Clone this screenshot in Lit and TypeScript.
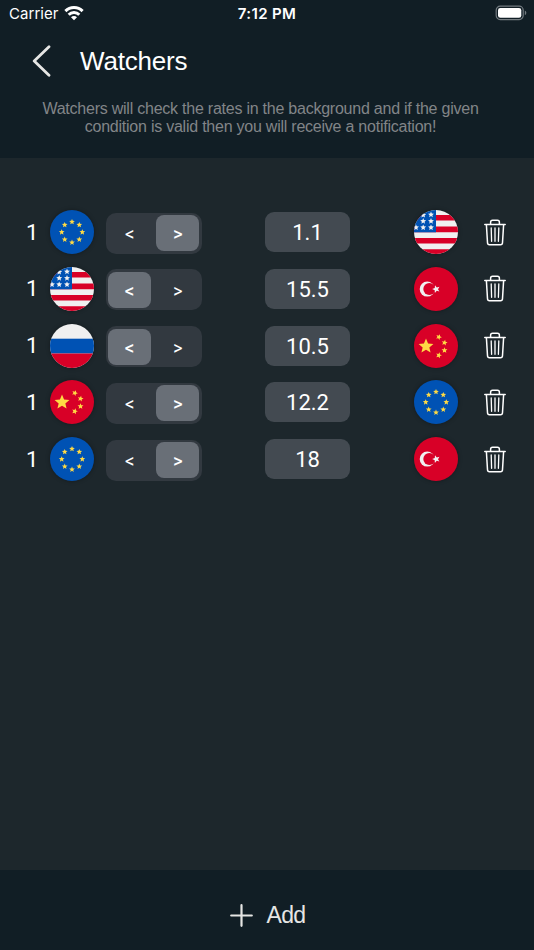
import { LitElement, html, svg, css } from "lit";
import { customElement, property, state } from "lit/decorators.js";
import { classMap } from "lit/directives/class-map.js";

type Currency = "eu" | "us" | "ru" | "cn" | "tr";

interface Watcher {
  amount: number;
  from: Currency;
  op: "<" | ">";
  value: string;
  to: Currency;
}

const star = (cx: number, cy: number, r: number, turn = 0) => {
  const pts: string[] = [];
  for (let i = 0; i < 10; i++) {
    const a = -Math.PI / 2 + turn + (i * Math.PI) / 5;
    const d = i % 2 ? r * 0.45 : r;
    pts.push(`${(cx + d * Math.cos(a)).toFixed(2)},${(cy + d * Math.sin(a)).toFixed(2)}`);
  }
  return svg`<polygon points=${pts.join(" ")} />`;
};

const FLAGS = {
  eu: () => svg`
    <rect width="44" height="44" fill="#0052b4" />
    <g fill="#ffda44">${Array.from({ length: 8 }, (_, i) =>
      star(22 + 10.3 * Math.sin((i * Math.PI) / 4), 22.2 - 10.3 * Math.cos((i * Math.PI) / 4), 3)
    )}</g>`,
  us: () => svg`
    <rect width="44" height="44" fill="#f0f0f0" />
    <path fill="#d80027" d="M0 5h44v5.6H0zM0 16.6h44v5.7H0zM0 28h44v5.6H0zM0 39.3h44V44H0z" />
    <rect width="22" height="22.3" fill="#0052b4" />
    <g fill="#f0f0f0">${[
      [9.2, 5], [17, 4.7], [9.2, 11.2], [17, 11.2], [2, 17.5], [9.2, 17.5], [17, 17.5],
    ].map(([x, y]) => star(x, y, 3.1))}</g>`,
  ru: () => svg`
    <rect width="44" height="44" fill="#f0f0f0" />
    <rect y="14.7" width="44" height="14.8" fill="#0052b4" />
    <rect y="29.5" width="44" height="14.5" fill="#d80027" />`,
  cn: () => svg`
    <rect width="44" height="44" fill="#d80027" />
    <g fill="#ffda44">
      ${star(12, 22.3, 7.8)}${star(24.8, 13, 3.1, 0.4)}${star(30.5, 18.7, 3.1, 0.2)}
      ${star(30.5, 26.3, 3.1)}${star(24.8, 31.3, 3.1, 0.3)}
    </g>`,
  tr: () => svg`
    <rect width="44" height="44" fill="#d80027" />
    <circle cx="13.2" cy="22.1" r="7.5" fill="#f0f0f0" />
    <circle cx="15.3" cy="22.1" r="6" fill="#d80027" />
    <g fill="#f0f0f0">${star(22.2, 22.1, 4, -0.3)}</g>`,
};

@customElement("currency-flag")
export class CurrencyFlag extends LitElement {
  @property() code: Currency = "eu";

  static styles = css`
    :host {
      display: block;
      width: 44px;
      height: 44px;
      border-radius: 50%;
      box-shadow: 0 0 4px rgba(0, 0, 0, 0.35);
    }
    .flag {
      display: block;
      width: 44px;
      height: 44px;
      border-radius: 50%;
    }
  `;

  render() {
    return html`<svg class="flag" viewBox="0 0 44 44">${FLAGS[this.code]()}</svg>`;
  }
}

@customElement("status-bar")
export class StatusBar extends LitElement {
  static styles = css`
    :host {
      display: grid;
      grid-template-columns: 1fr auto 1fr;
      align-items: center;
      height: 28px;
      padding: 0 7px 0 9px;
      color: #fff;
      font: 15px/28px Inter, sans-serif;
    }
    .carrier {
      display: flex;
      align-items: center;
      gap: 5px;
      letter-spacing: 0.05px;
    }
    .time {
      margin-right: 2px;
      font-weight: 600;
      letter-spacing: 0.35px;
    }
    .battery {
      justify-self: end;
    }
    svg {
      display: block;
      margin-top: -2px;
    }
  `;

  render() {
    return html`
      <div class="carrier">
        <span>Carrier</span>
        <svg width="20" height="16" viewBox="0 0 20 16" fill="none" stroke="#fff" stroke-width="3">
          <path d="M1.4 6.1a12.2 12.2 0 0 1 17.2 0" />
          <path d="M4.7 9.7a7.5 7.5 0 0 1 10.6 0" />
          <path d="M10 15.3 7 12.3a4.2 4.2 0 0 1 6 0z" fill="#fff" stroke="none" />
        </svg>
      </div>
      <span class="time">7:12 PM</span>
      <svg class="battery" width="32" height="16" viewBox="0 0 32 16">
        <rect x="1.2" y="1.2" width="27" height="13.4" rx="4" fill="none" stroke="#737b80" stroke-width="1.2" />
        <rect x="3" y="3" width="23.3" height="9.8" rx="2.3" fill="#fff" />
        <path d="M29.8 5.6c2 .8 2 3.8 0 4.6z" fill="#737b80" />
      </svg>
    `;
  }
}

@customElement("watcher-row")
export class WatcherRow extends LitElement {
  @property({ attribute: false }) watcher!: Watcher;

  static styles = css`
    :host {
      display: grid;
      grid-template-columns: 24px 55.5px 97px 1fr 44px 48px;
      align-items: center;
      height: 44px;
      padding: 0 28px 0 26px;
      color: #fff;
      font: 22px/40px Roboto, sans-serif;
    }
    .amount {
      padding-top: 1px;
    }
    .segments {
      display: flex;
      box-sizing: border-box;
      width: 96.4px;
      height: 41px;
      margin-top: 2px;
      padding: 2.5px;
      justify-content: space-between;
      border-radius: 10px;
      background: #323940;
      font: 500 16px/37px Inter, sans-serif;
      text-align: center;
    }
    .segment {
      width: 43px;
      height: 36px;
      border-radius: 8px;
    }
    .selected {
      background: #696f77;
      font-weight: 600;
    }
    .value {
      width: 85px;
      height: 40px;
      margin-left: 62.5px;
      border-radius: 9px;
      background: #434a51;
      line-height: 42px;
      text-align: center;
    }
    .trash {
      display: block;
      margin-left: 26px;
    }
  `;

  render() {
    const w = this.watcher;
    return html`
      <span class="amount">${w.amount}</span>
      <currency-flag .code=${w.from}></currency-flag>
      <div class="segments">
        ${["<", ">"].map(
          (op) => html`<span class=${classMap({ segment: true, selected: op === w.op })}>${op}</span>`
        )}
      </div>
      <div class="value">${w.value}</div>
      <currency-flag .code=${w.to}></currency-flag>
      <svg class="trash" width="22" height="27" viewBox="0 0 22 27" fill="none" stroke="#fff"
        stroke-width="1.5" stroke-linecap="round" stroke-linejoin="round">
        <path d="M.8 5.6h20.4M6.6 5.4V3.2q0-2 2-2h4.8q2 0 2 2v2.2" />
        <path d="m2.4 5.8 1.1 17.9q.1 2 2 2h11q1.9 0 2-2l1.1-17.9" />
        <path d="m7.2 9 .4 13.3M11 9v13.3M14.8 9l-.4 13.3" stroke-width="1.3" />
      </svg>
    `;
  }
}

@customElement("app-root")
export class AppRoot extends LitElement {
  @state() private watchers: Watcher[] = [
    { amount: 1, from: "eu", op: ">", value: "1.1", to: "us" },
    { amount: 1, from: "us", op: "<", value: "15.5", to: "tr" },
    { amount: 1, from: "ru", op: "<", value: "10.5", to: "cn" },
    { amount: 1, from: "cn", op: ">", value: "12.2", to: "eu" },
    { amount: 1, from: "eu", op: ">", value: "18", to: "tr" },
  ];

  static styles = css`
    :host {
      display: flex;
      flex-direction: column;
      height: 100vh;
      background: #1d272c;
      font-family: "Liberation Sans", Arial, sans-serif;
    }
    .header {
      box-sizing: border-box;
      height: 158px;
      background: #111e25;
    }
    .nav {
      display: flex;
      align-items: center;
      gap: 29px;
      height: 66px;
      padding-left: 32px;
    }
    .title {
      margin: 0;
      color: #fff;
      font-size: 26px;
      font-weight: 400;
      letter-spacing: -0.2px;
      line-height: 30px;
    }
    .hint {
      margin: 6px 0 0;
      padding-right: 13px;
      color: #828588;
      font-size: 16px;
      letter-spacing: -0.235px;
      line-height: 18px;
      text-align: center;
    }
    .list {
      display: flex;
      flex: 1;
      flex-direction: column;
      gap: 12.8px;
      padding-top: 52px;
    }
    .footer {
      display: flex;
      align-items: center;
      justify-content: center;
      gap: 13px;
      box-sizing: border-box;
      height: 80px;
      padding: 10px 0 0 2px;
      background: #111e25;
      color: #e6e6e4;
      font-size: 23px;
    }
    .add {
      letter-spacing: -0.6px;
    }
    svg {
      display: block;
    }
  `;

  render() {
    return html`
      <header class="header">
        <status-bar></status-bar>
        <div class="nav">
          <svg width="19" height="32" viewBox="0 0 19 32" fill="none" stroke="#e6e6e4"
            stroke-width="2.8" stroke-linecap="round" stroke-linejoin="round">
            <path d="M17 1.7 2.2 16 17 30.3" />
          </svg>
          <h1 class="title">Watchers</h1>
        </div>
        <p class="hint">
          Watchers will check the rates in the background and if the given<br />condition is valid
          then you will receive a notification!
        </p>
      </header>
      <main class="list">
        ${this.watchers.map((w) => html`<watcher-row .watcher=${w}></watcher-row>`)}
      </main>
      <footer class="footer">
        <svg width="23" height="23" viewBox="0 0 23 23" stroke="#e6e6e4" stroke-width="2.2" stroke-linecap="round">
          <path d="M11.5 1.2v20.6M1.2 11.5h20.6" />
        </svg>
        <span class="add">Add</span>
      </footer>
    `;
  }
}
